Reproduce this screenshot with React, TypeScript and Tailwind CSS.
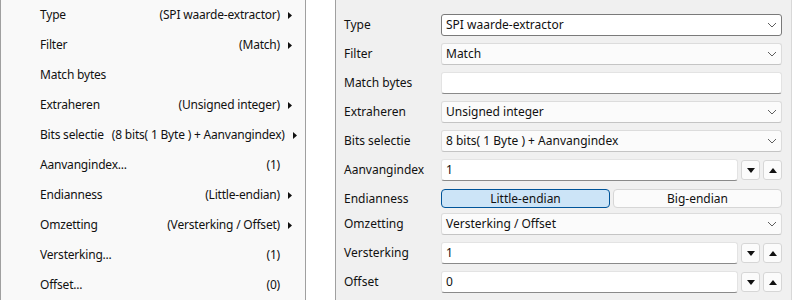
import React from 'react';

const font = { fontFamily: '"Noto Sans", "Open Sans", sans-serif' };

interface MenuItem {
  label: string;
  value?: string;
  sub?: boolean;
}

const MENU: MenuItem[] = [
  { label: 'Type', value: '(SPI waarde-extractor)', sub: true },
  { label: 'Filter', value: '(Match)', sub: true },
  { label: 'Match bytes' },
  { label: 'Extraheren', value: '(Unsigned integer)', sub: true },
  { label: 'Bits selectie', value: '(8 bits( 1 Byte ) + Aanvangindex)', sub: true },
  { label: 'Aanvangindex...', value: '(1)' },
  { label: 'Endianness', value: '(Little-endian)', sub: true },
  { label: 'Omzetting', value: '(Versterking / Offset)', sub: true },
  { label: 'Versterking...', value: '(1)' },
  { label: 'Offset...', value: '(0)' },
];

function Chevron() {
  return (
    <svg width="10" height="6" viewBox="0 0 10 6" className="shrink-0">
      <path d="M1 1 L5 5 L9 1" fill="none" stroke="#5f5f5f" strokeWidth="1" />
    </svg>
  );
}

function Select({ value, focused }: { value: string; focused?: boolean }) {
  return (
    <div
      className={
        focused
          ? 'flex h-[22px] flex-1 items-center justify-between rounded-[3px] border border-[#7a7a7a] bg-white pl-[4px] pr-[4px]'
          : 'flex h-[22px] flex-1 items-center justify-between rounded-[3px] border border-[#dcdcdc] border-b-[#c4c4c4] bg-[#fbfbfb] pl-[4px] pr-[4px]'
      }
    >
      <span className="whitespace-nowrap">{value}</span>
      <Chevron />
    </div>
  );
}

function TextBox({ value }: { value: string }) {
  return (
    <div className="flex h-[22px] flex-1 items-center rounded-[3px] border border-[#e3e3e3] border-b-[#8a8a8a] bg-white pl-[4px]">
      <span>{value}</span>
    </div>
  );
}

function SpinButton({ up }: { up?: boolean }) {
  return (
    <div className="flex h-[20px] w-[19px] items-center justify-center rounded-[3px] border border-[#d6d6d6] bg-[#fbfbfb]">
      <svg width="8" height="5" viewBox="0 0 8 5">
        {up ? <path d="M0 5 L4 0 L8 5 Z" fill="#111" /> : <path d="M0 0 L8 0 L4 5 Z" fill="#111" />}
      </svg>
    </div>
  );
}

function Spin({ value }: { value: string }) {
  return (
    <div className="flex flex-1 items-center">
      <TextBox value={value} />
      <div className="ml-[3px] flex gap-[3px]">
        <SpinButton />
        <SpinButton up />
      </div>
    </div>
  );
}

function Row({ label, children, className }: { label: string; children: React.ReactNode; className: string }) {
  return (
    <div className={'flex items-center ' + className}>
      <div className="w-[97px] shrink-0 whitespace-nowrap">{label}</div>
      {children}
    </div>
  );
}

export default function App() {
  return (
    <div className="flex h-[300px] w-[792px] overflow-hidden bg-white text-[12px] text-[#111]" style={font}>
      {/* context menu */}
      <div className="w-[306px] shrink-0 border-l border-r border-[#a0a0a0] bg-[#f9f9f9] tracking-[-0.2px]">
        {MENU.map((m) => (
          <div key={m.label} className="flex h-[30px] items-center gap-[8px] whitespace-nowrap pl-[39px] pr-[13px]">
            <span className="flex-1">{m.label}</span>
            {m.value && <span>{m.value}</span>}
            <span className="-ml-[8px] flex w-[12px] shrink-0 justify-end">
              {m.sub && (
                <svg width="4" height="7" viewBox="0 0 4 7">
                  <path d="M0 0 L4 3.5 L0 7 Z" fill="#111" />
                </svg>
              )}
            </span>
          </div>
        ))}
      </div>

      <div className="w-[30px] shrink-0 border-r border-[#a0a0a0] bg-white" />

      {/* property panel */}
      <div className="flex flex-1 flex-col border-r border-[#d8d8d8] bg-[#f0f0f0] pl-[8px] pr-[9px] pt-[14px]">
        <Row label="Type" className="">
          <Select value="SPI waarde-extractor" focused />
        </Row>
        <Row label="Filter" className="mt-[7px]">
          <Select value="Match" />
        </Row>
        <Row label="Match bytes" className="mt-[7px]">
          <TextBox value="" />
        </Row>
        <Row label="Extraheren" className="mt-[7px]">
          <Select value="Unsigned integer" />
        </Row>
        <Row label="Bits selectie" className="mt-[7px]">
          <Select value="8 bits( 1 Byte ) + Aanvangindex" />
        </Row>
        <Row label="Aanvangindex" className="mt-[7px]">
          <Spin value="1" />
        </Row>
        <Row label="Endianness" className="mt-[8px]">
          <div className="flex flex-1 gap-[3px]">
            <div className="flex h-[19px] flex-1 items-center justify-center rounded-[4px] border border-[#005499] bg-[#cce4f7]">
              Little-endian
            </div>
            <div className="flex h-[19px] flex-1 items-center justify-center rounded-[4px] border border-[#d6d6d6] bg-[#fbfbfb]">
              Big-endian
            </div>
          </div>
        </Row>
        <Row label="Omzetting" className="mt-[5px]">
          <Select value="Versterking / Offset" />
        </Row>
        <Row label="Versterking" className="mt-[7px]">
          <Spin value="1" />
        </Row>
        <Row label="Offset" className="mt-[7px]">
          <Spin value="0" />
        </Row>
      </div>
    </div>
  );
}
